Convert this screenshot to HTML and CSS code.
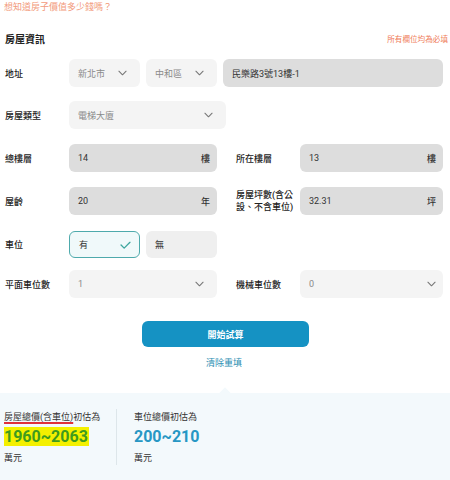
FILE: index.html
```html
<!DOCTYPE html>
<html lang="zh-Hant">
<head>
<meta charset="utf-8">
<link rel="stylesheet" href="styles.css">
</head>
<body>
<div class="page">
  <div class="intro">想知道房子價值多少錢嗎？</div>
  <div class="form">
    <div class="header">
      <div class="title">房屋資訊</div>
      <div class="required">所有欄位均為必填</div>
    </div>

    <div class="row row-1">
      <div class="label">地址</div>
      <div class="select sm"><span>新北市</span><svg class="chev" viewBox="0 0 10 6"><path d="M1 1l4 4 4-4"/></svg></div>
      <div class="select sm"><span>中和區</span><svg class="chev" viewBox="0 0 10 6"><path d="M1 1l4 4 4-4"/></svg></div>
      <div class="input addr"><span>民樂路3號13樓-1</span></div>
    </div>

    <div class="row row-2">
      <div class="label">房屋類型</div>
      <div class="select type"><span>電梯大廈</span><svg class="chev" viewBox="0 0 10 6"><path d="M1 1l4 4 4-4"/></svg></div>
    </div>

    <div class="row row-3">
      <div class="label">總樓層</div>
      <div class="input half"><span>14</span><span class="unit">樓</span></div>
      <div class="label right">所在樓層</div>
      <div class="input half2"><span>13</span><span class="unit">樓</span></div>
    </div>

    <div class="row row-4">
      <div class="label">屋齡</div>
      <div class="input half"><span>20</span><span class="unit">年</span></div>
      <div class="label right two">房屋坪數(含公設、不含車位)</div>
      <div class="input half2"><span>32.31</span><span class="unit">坪</span></div>
    </div>

    <div class="row row-5">
      <div class="label">車位</div>
      <div class="choice on"><span>有</span><svg class="check" viewBox="0 0 12 9"><path d="M1 4.5l3.5 3.5L11 1.5"/></svg></div>
      <div class="choice"><span>無</span></div>
    </div>

    <div class="row row-6">
      <div class="label">平面車位數</div>
      <div class="select half"><span>1</span><svg class="chev" viewBox="0 0 10 6"><path d="M1 1l4 4 4-4"/></svg></div>
      <div class="label right">機械車位數</div>
      <div class="select half2 wide-pad"><span>0</span><svg class="chev" viewBox="0 0 10 6"><path d="M1 1l4 4 4-4"/></svg></div>
    </div>

    <div class="actions">
      <button class="submit">開始試算</button>
      <div class="reset">清除重填</div>
    </div>
  </div>

  <div class="result">
    <div class="col">
      <div class="r-label"><span class="mark">房屋總價(含車位)</span>初估為</div>
      <div class="r-num green"><span class="hl">1960~2063</span></div>
      <div class="r-unit">萬元</div>
    </div>
    <div class="divider"></div>
    <div class="col">
      <div class="r-label">車位總價初估為</div>
      <div class="r-num blue">200~210</div>
      <div class="r-unit">萬元</div>
    </div>
  </div>
</div>
</body>
</html>
```

FILE: styles.css
```css
* { box-sizing: border-box; }
html, body { margin: 0; padding: 0; background: #fff; }
body {
  font-family: Roboto, "Noto Sans CJK TC", sans-serif;
  color: #333;
  font-size: 9px;
  width: 450px;
  height: 480px;
  overflow: hidden;
}
.page { display: flex; flex-direction: column; height: 480px; }
.intro {
  height: 15px;
  line-height: 14px;
  padding-left: 4px;
  color: #f29a7c;
  font-size: 9px;
}
.form { padding: 0 7px 0 5px; }
.header {
  margin-top: 15px;
  height: 16px;
  display: flex;
  align-items: center;
  justify-content: space-between;
}
.title { font-size: 10px; font-weight: 700; color: #222; }
.required { font-size: 7.6px; color: #ef7b58; margin-right: -5px; }

.row { display: flex; align-items: center; height: 28px; }
.row-1 { margin-top: 13px; }
.row-2 { margin-top: 14px; }
.row-3 { margin-top: 15px; }
.row-4 { margin-top: 15px; }
.row-5 { margin-top: 16px; height: 27px; }
.row-6 { margin-top: 12px; }

.label { width: 64px; flex: none; font-size: 9px; color: #222; font-weight: 500; }
.label.right { margin-left: 19px; }
.label.two { line-height: 12px; padding-right: 6px; }

.select, .input, .choice {
  height: 100%;
  border-radius: 6px;
  display: flex;
  align-items: center;
  justify-content: space-between;
  font-size: 9px;
  flex: none;
}
.select { background: #f4f4f4; color: #8a8a8a; padding: 0 13px 0 9px; }
.select.wide-pad { padding-right: 7px; }
.input { background: #dddddd; color: #333; padding: 0 7px 0 9px; }
.sm { width: 71px; margin-right: 6px; }
.addr { width: 220px; }
.type { width: 157px; }
.half { width: 148px; }
.half2 { width: 143px; }
.unit { color: #333; font-size: 9px; font-weight: 500; }

.chev { width: 9px; height: 6px; }
.chev path { fill: none; stroke: #777; stroke-width: 1.2; stroke-linecap: round; stroke-linejoin: round; }

.choice { width: 71px; margin-right: 6px; background: #efefef; color: #333; padding: 0 8px 0 9px; }
.choice.on { background: #f0f9fa; border: 1px solid #4eaaac; }
.check { width: 11px; height: 8px; }
.check path { fill: none; stroke: #3ea79f; stroke-width: 1.5; stroke-linecap: round; stroke-linejoin: round; }

.actions { display: flex; flex-direction: column; align-items: center; margin-top: 23px; }
.submit {
  width: 167px;
  height: 26px;
  border: 0;
  border-radius: 6px;
  background: #1592c3;
  color: #fff;
  font-family: inherit;
  font-size: 9px;
  font-weight: 700;
  margin-left: 3px;
}
.reset { margin-top: 10px; color: #2b8eb2; font-size: 9px; line-height: 12px; }

.result {
  position: relative;
  margin-top: 24px;
  flex: 1;
  background: #f3f9fc;
  display: flex;
  align-items: flex-start;
  padding: 16px 0 0 4px;
}
.result::before {
  content: "";
  position: absolute;
  left: 221px;
  top: -4px;
  width: 8px;
  height: 8px;
  background: #f3f9fc;
  transform: rotate(45deg);
}
.col { display: flex; flex-direction: column; }
.col:first-child { width: 112px; }
.divider { width: 1px; height: 56px; background: #dde6ea; margin: 0 17px 0 0; }
.r-label { font-size: 9px; color: #333; height: 16px; line-height: 16px; }
.mark { text-decoration: underline; text-decoration-color: #e0303a; text-decoration-thickness: 1.5px; text-underline-offset: 2px; }
.r-num { font-size: 16px; font-weight: 700; height: 22px; line-height: 22px; margin-top: 1px; }
.green { color: #3f9b1e; }
.hl { background: #f4f000; padding: 0 1px 0 0; }
.blue { color: #2797c4; }
.r-unit { font-size: 9px; color: #333; margin-top: 3px; line-height: 14px; }
```
